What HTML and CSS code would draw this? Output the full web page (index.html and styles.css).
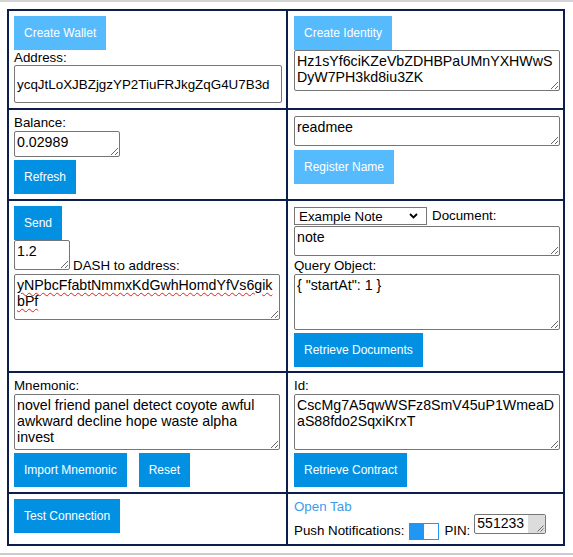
FILE: index.html
```html
<!DOCTYPE html>
<html>
<head>
<meta charset="utf-8">
<link rel="stylesheet" href="styles.css">
</head>
<body>
<div class="frame">
  <div class="grid">
    <div class="cell left">
      <button class="btn light">Create Wallet</button>
      <label class="lbl lbl-addr">Address:</label>
      <input class="addr" value="ycqJtLoXJBZjgzYP2TiuFRJkgZqG4U7B3d">
    </div>
    <div class="cell right">
      <button class="btn light">Create Identity</button>
      <textarea class="ta ta-identity">Hz1sYf6ciKZeVbZDHBPaUMnYXHWwSDyW7PH3kd8iu3ZK</textarea>
    </div>

    <div class="cell left">
      <label class="lbl">Balance:</label>
      <textarea class="ta ta-balance">0.02989</textarea>
      <button class="btn dark mt3">Refresh</button>
    </div>
    <div class="cell right">
      <textarea class="ta ta-name">readmee</textarea>
      <button class="btn light mt4">Register Name</button>
    </div>

    <div class="cell left">
      <button class="btn dark">Send</button>
      <div class="sendrow">
        <textarea class="ta ta-amount">1.2</textarea>
        <span class="lbl dash">DASH to address:</span>
      </div>
      <textarea class="ta ta-to spell">yNPbcFfabtNmmxKdGwhHomdYfVs6gikbPf</textarea>
    </div>
    <div class="cell right">
      <div class="docrow">
        <span class="sel-wrap">
          <select class="sel"><option>Example Note</option></select>
          <svg class="chev" width="9" height="6" viewBox="0 0 9 6"><path d="M1 1 L4.5 4.5 L8 1" fill="none" stroke="#000" stroke-width="1.8"/></svg>
        </span>
        <span class="lbl doc">Document:</span>
      </div>
      <textarea class="ta ta-note">note</textarea>
      <label class="lbl mt2">Query Object:</label>
      <textarea class="ta ta-query">{ "startAt": 1 }</textarea>
      <button class="btn dark mt3">Retrieve Documents</button>
    </div>

    <div class="cell left">
      <label class="lbl">Mnemonic:</label>
      <textarea class="ta ta-big">novel friend panel detect coyote awful awkward decline hope waste alpha invest</textarea>
      <div class="btnrow">
        <button class="btn dark">Import Mnemonic</button>
        <button class="btn dark">Reset</button>
      </div>
    </div>
    <div class="cell right">
      <label class="lbl">Id:</label>
      <textarea class="ta ta-big">CscMg7A5qwWSFz8SmV45uP1WmeaDaS88fdo2SqxiKrxT</textarea>
      <button class="btn dark mt3">Retrieve Contract</button>
    </div>

    <div class="cell left">
      <button class="btn dark">Test Connection</button>
    </div>
    <div class="cell right">
      <a class="link" href="#">Open Tab</a>
      <div class="pushrow">
        <span class="lbl push">Push Notifications:</span>
        <span class="toggle"><span class="knob"></span></span>
        <span class="lbl pinlbl">PIN:</span>
        <span class="pin">
          <span class="pin-text">551233</span>
          <span class="pin-side">
            <svg class="grip" width="8" height="8" viewBox="0 0 8 8"><path d="M7.5 1.5 L1.5 7.5 M7.5 4.5 L4.5 7.5" stroke="#6f6f6f" stroke-width="1"/></svg>
          </span>
        </span>
      </div>
    </div>
  </div>
  <div class="bottomline"></div>
</div>
</body>
</html>
```

FILE: styles.css
```css
html, body {
  margin: 0;
  background: #ffffff;
}

body {
  font-family: "Liberation Sans", Arial, sans-serif;
  color: #000;
}

.frame {
  border-top: 2px solid #d4d4d4;
  padding-top: 7px;
}

.grid {
  margin-left: 7px;
  display: grid;
  box-sizing: border-box;
  width: 558px;
  padding: 2px;
  gap: 2px;
  background: #0c1e4b;
  grid-template-columns: 277px 275px;
  grid-template-rows: 97px 89px 170px 119px 50px;
}

.bottomline {
  margin-top: 7px;
  height: 2px;
  background: #cbcbcb;
}

.cell {
  background: #fff;
  padding: 5px 0 0 5px;
  display: flex;
  flex-direction: column;
  align-items: flex-start;
  min-width: 0;
}

.cell.right {
  padding-left: 6px;
}

.btn {
  height: 34px;
  border: none;
  padding: 0 10px;
  margin: 0;
  font-family: "Liberation Sans", Arial, sans-serif;
  font-size: 12px;
  color: #fff;
  cursor: pointer;
}

.btn.light {
  background: #56bbfd;
}

.btn.dark {
  background: #0291e2;
}

.mt2 { margin-top: 2px; }
.mt3 { margin-top: 3px; }
.mt4 { margin-top: 4px; }

.lbl {
  font-size: 13.33px;
  line-height: 16px;
}

.lbl-addr {
  line-height: 15px;
}

.addr {
  box-sizing: border-box;
  width: 268px;
  height: 38px;
  margin: 0;
  border: 1px solid #767676;
  border-radius: 2px;
  padding: 0 2px;
  font-family: "Liberation Sans", Arial, sans-serif;
  font-size: 13.4px;
  color: #000;
}

.ta {
  box-sizing: border-box;
  margin: 0;
  border: 1px solid #767676;
  border-radius: 2px;
  padding: 2px;
  font-family: "Liberation Sans", Arial, sans-serif;
  font-size: 14.2px;
  line-height: 16px;
  color: #000;
  background: #fff;
  resize: both;
  overflow: hidden;
}

.ta-identity { width: 266px; height: 41px; }
.ta-balance { width: 106px; height: 26px; }
.ta-name { width: 266px; height: 30px; margin-top: 1px; }
.ta-amount { width: 56px; height: 30px; }
.ta-to { width: 266px; height: 46px; }
.ta-note { width: 266px; height: 30px; margin-top: 1px; }
.ta-query { width: 266px; height: 56px; }
.ta-big { width: 266px; height: 56px; }

.spell {
  text-decoration: underline wavy #e0201a;
  text-decoration-thickness: 1px;
  text-underline-offset: 2px;
}

.sendrow {
  display: flex;
  align-items: flex-start;
  height: 34px;
}

.dash {
  margin-top: 18px;
  margin-left: 3px;
}

.docrow {
  display: flex;
  align-items: center;
  margin-top: 1px;
}

.sel-wrap {
  position: relative;
  display: block;
}

.sel {
  appearance: none;
  -webkit-appearance: none;
  box-sizing: border-box;
  width: 133px;
  height: 18px;
  margin: 0;
  border: 1px solid #767676;
  border-radius: 0;
  padding: 0 0 0 4px;
  background: #fff;
  font-family: "Liberation Sans", Arial, sans-serif;
  font-size: 13.33px;
  color: #000;
  display: block;
}

.chev {
  position: absolute;
  right: 9px;
  top: 6px;
}

.doc {
  margin-left: 5px;
}

.btnrow {
  display: flex;
  gap: 12px;
  margin-top: 3px;
}

.link {
  font-size: 13.33px;
  line-height: 15px;
  color: #3d9bea;
  text-decoration: none;
}

.pushrow {
  display: flex;
  align-items: flex-start;
}

.push {
  margin-top: 9px;
}

.toggle {
  box-sizing: border-box;
  width: 30px;
  height: 17px;
  margin: 9px 0 0 5px;
  padding: 1px;
  background: #2196f3;
  display: flex;
  justify-content: flex-end;
}

.knob {
  width: 14px;
  height: 15px;
  background: #fff;
}

.pinlbl {
  margin: 9px 0 0 5px;
}

.pin {
  box-sizing: border-box;
  width: 72px;
  height: 20px;
  margin-left: 4px;
  border: 1px solid #767676;
  border-radius: 2px;
  display: flex;
  overflow: hidden;
}

.pin-text {
  flex: 1;
  padding-left: 2px;
  font-size: 14px;
  line-height: 16px;
}

.pin-side {
  width: 17px;
  background: #dcdcdc;
  display: flex;
  align-items: flex-end;
  justify-content: flex-end;
}

.grip {
  display: block;
  margin: 0 1px 1px 0;
}
```
